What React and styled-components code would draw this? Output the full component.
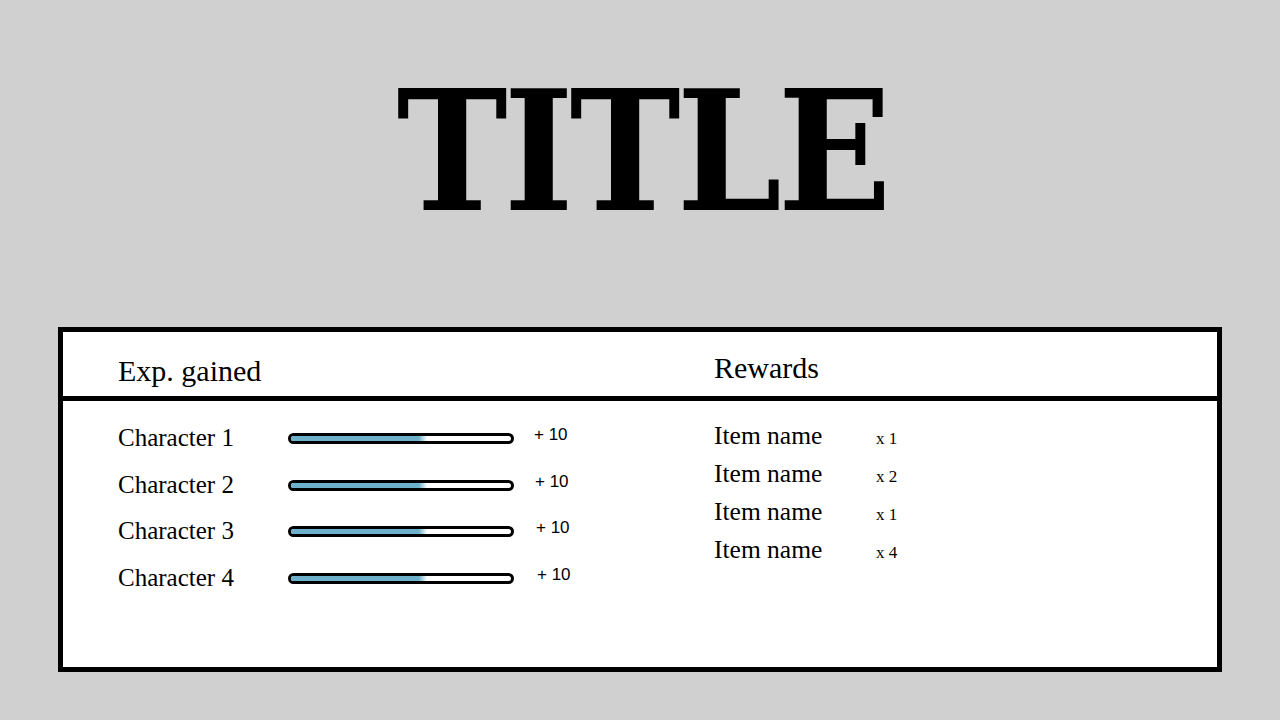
import React from "react";
import styled, { createGlobalStyle } from "styled-components";

const characters = [
  { name: "Character 1", fill: 62, gain: "+ 10", shift: 0 },
  { name: "Character 2", fill: 62, gain: "+ 10", shift: 1 },
  { name: "Character 3", fill: 62, gain: "+ 10", shift: 2 },
  { name: "Character 4", fill: 62, gain: "+ 10", shift: 3 },
];

const rewards = [
  { name: "Item name", qty: "x 1" },
  { name: "Item name", qty: "x 2" },
  { name: "Item name", qty: "x 1" },
  { name: "Item name", qty: "x 4" },
];

const App = () => {
  return (
    <>
      <GlobalStyle />
      <Page>
        <TitleArea>
          <Title>TITLE</Title>
        </TitleArea>
        <Panel>
          <PanelHeader>
            <HeaderCell $top={21}>Exp. gained</HeaderCell>
            <HeaderCell $top={18}>Rewards</HeaderCell>
          </PanelHeader>
          <PanelBody>
            <ExpList>
              {characters.map((c, index) => (
                <CharRow key={index}>
                  <CharName>{c.name}</CharName>
                  <Bar>
                    <BarFill style={{ width: `${c.fill}%` }} />
                  </Bar>
                  <Gain $shift={c.shift}>{c.gain}</Gain>
                </CharRow>
              ))}
            </ExpList>
            <RewardList>
              {rewards.map((r, index) => (
                <RewardRow key={index}>
                  <ItemName>{r.name}</ItemName>
                  <Qty>{r.qty}</Qty>
                </RewardRow>
              ))}
            </RewardList>
          </PanelBody>
        </Panel>
      </Page>
    </>
  );
};

const GlobalStyle = createGlobalStyle`
  html, body {
    margin: 0;
    padding: 0;
    background: #d0d0d0;
  }
`;

const Page = styled.div`
  width: 1280px;
  height: 720px;
  background: #d0d0d0;
  overflow: hidden;
`;

const TitleArea = styled.div`
  height: 327px;
  box-sizing: border-box;
  padding-top: 69px;
  text-align: center;
`;

const Title = styled.h1`
  margin: 0;
  padding-left: 4px;
  font-family: "DejaVu Serif Condensed", "DejaVu Serif", serif;
  font-stretch: condensed;
  font-weight: bold;
  font-size: 166px;
  letter-spacing: -4px;
  line-height: 1;
  color: #000;
`;

const Panel = styled.div`
  margin-left: 58px;
  width: 1164px;
  height: 345px;
  box-sizing: border-box;
  border: 5px solid #000;
  background: #fff;
  font-family: "Liberation Serif", "Times New Roman", serif;
  color: #000;
`;

const PanelHeader = styled.div`
  display: grid;
  grid-template-columns: 651px 1fr;
  height: 64px;
  border-bottom: 5px solid #000;
`;

const HeaderCell = styled.div`
  padding-top: ${(p) => p.$top}px;
  font-size: 30px;
  line-height: 36px;

  &:first-child {
    padding-left: 55px;
  }
`;

const PanelBody = styled.div`
  display: grid;
  grid-template-columns: 651px 1fr;
`;

const ExpList = styled.div`
  padding: 22px 0 0 55px;
`;

const CharRow = styled.div`
  display: grid;
  grid-template-columns: 170px 226px auto;
  align-items: start;
  height: 46.5px;
`;

const CharName = styled.div`
  font-size: 25px;
  line-height: 30px;
  white-space: nowrap;
`;

const Bar = styled.div`
  margin-top: 10px;
  height: 11px;
  box-sizing: border-box;
  border: 3px solid #000;
  border-radius: 6px;
  background: #fff;
  overflow: hidden;
`;

const BarFill = styled.div`
  height: 100%;
  background: linear-gradient(to right, #6cb0cc 0%, #6cb0cc 94%, #ffffff 100%);
`;

const Gain = styled.div`
  margin-top: 2px;
  margin-left: ${(p) => 20 + p.$shift}px;
  font-family: "Liberation Sans", Arial, sans-serif;
  font-size: 17px;
  line-height: 20px;
  white-space: nowrap;
`;

const RewardList = styled.div`
  padding-top: 16px;
`;

const RewardRow = styled.div`
  display: grid;
  grid-template-columns: 162px auto;
  align-items: baseline;
  height: 38px;
`;

const ItemName = styled.div`
  font-size: 25.5px;
  line-height: 38px;
  white-space: nowrap;
`;

const Qty = styled.div`
  font-size: 17px;
  white-space: nowrap;
`;

export default App;
